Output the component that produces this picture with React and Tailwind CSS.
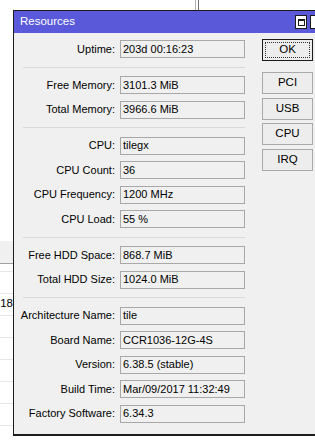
import React from "react";

const groups = [
  [["Uptime:", "203d 00:16:23"]],
  [
    ["Free Memory:", "3101.3 MiB"],
    ["Total Memory:", "3966.6 MiB"],
  ],
  [
    ["CPU:", "tilegx"],
    ["CPU Count:", "36"],
    ["CPU Frequency:", "1200 MHz"],
    ["CPU Load:", "55 %"],
  ],
  [
    ["Free HDD Space:", "868.7 MiB"],
    ["Total HDD Size:", "1024.0 MiB"],
  ],
  [
    ["Architecture Name:", "tile"],
    ["Board Name:", "CCR1036-12G-4S"],
    ["Version:", "6.38.5 (stable)"],
    ["Build Time:", "Mar/09/2017 11:32:49"],
    ["Factory Software:", "6.34.3"],
  ],
];

function Row({ label, value }) {
  return (
    <div className="flex items-center h-[18px]">
      <div className="w-[101px] text-right whitespace-nowrap leading-none">{label}</div>
      <div className="ml-[5px] w-[125px] h-[18px] border border-[#a8a8a8] bg-[#f0f0f0] flex items-center pl-[2px] whitespace-nowrap overflow-hidden leading-none">
        {value}
      </div>
    </div>
  );
}

function Separator() {
  return (
    <div className="h-[18px] flex items-center">
      <div className="ml-[9px] w-[222px] h-[1px] bg-[#d9d9d9]" />
    </div>
  );
}

function Btn({ children }) {
  return (
    <div className="h-[22px] w-[51px] border border-[#a9a9a9] bg-[#ededed] flex items-center justify-center text-[11.5px] leading-none">
      {children}
    </div>
  );
}

export default function App() {
  return (
    <div className="relative w-[315px] h-[447px] overflow-hidden bg-white font-['Liberation_Sans',Arial,sans-serif] text-[11px] text-black">
      {/* background window bits */}
      <div className="absolute left-[195px] top-0 h-[10px] w-[1px] bg-[#b0b0b0]" />
      <div className="absolute left-[198px] top-0 h-[10px] w-[1px] bg-[#707070]" />
      <div className="absolute left-0 top-[241px] w-[13px] flex flex-col">
        <div className="h-[23px] bg-[#f0f0f0] border-b border-[#a0a0a0]" />
        <div className="h-[8px] border-b border-[#e6e6e6]" />
        <div className="h-[22px] border-b border-[#e6e6e6]" />
        <div className="h-[22px] border-b border-[#e6e6e6] relative overflow-visible">
          <div className="absolute right-[0px] top-[4px] leading-none text-[11.5px] whitespace-nowrap">:18</div>
        </div>
        <div className="h-[22px] border-b border-[#e6e6e6]" />
        <div className="h-[22px] border-b border-[#e6e6e6]" />
        <div className="h-[22px] border-b border-[#e6e6e6]" />
        <div className="h-[22px] border-b border-[#e6e6e6]" />
        <div className="h-[22px] border-b border-[#e6e6e6]" />
        <div className="h-[22px] border-b border-[#e6e6e6]" />
      </div>

      {/* Resources window */}
      <div className="absolute left-[13px] top-[10px] w-[310px] h-[426px] border-l border-t border-b-2 border-[#1c1c1c] bg-[#f0f0f0] flex flex-col">
        <div className="h-[22px] bg-[#5959d9] flex items-center pl-[6px] text-white text-[11.5px] leading-none">
          <span>Resources</span>
          <div className="ml-auto mr-[1px] flex gap-[3px]">
            <div className="w-[12px] h-[14px] bg-white border border-[#1c1c1c] flex items-center justify-center">
              <div className="w-[7px] h-[7px] border border-[#1c1c1c] border-t-2" />
            </div>
            <div className="w-[12px] h-[14px] bg-white border border-[#1c1c1c]" />
          </div>
        </div>
        <div className="flex pt-[6px]">
          <div className="flex flex-col mt-[1px]">
            {groups.map((g, gi) => (
              <React.Fragment key={gi}>
                {gi > 0 && <Separator />}
                <div className="flex flex-col gap-[6.5px]">
                  {g.map(([l, v]) => (
                    <Row key={l} label={l} value={v} />
                  ))}
                </div>
              </React.Fragment>
            ))}
          </div>
          <div className="ml-[17px] flex flex-col">
            <div className="h-[22px] w-[51px] border border-[#1a1a1a] bg-[#ededed] flex p-[2px]">
              <div className="flex-1 border border-dotted border-[#333] flex items-center justify-center text-[11.5px] leading-none">
                OK
              </div>
            </div>
            <div className="mt-[11px] flex flex-col gap-[3.5px]">
              <Btn>PCI</Btn>
              <Btn>USB</Btn>
              <Btn>CPU</Btn>
              <Btn>IRQ</Btn>
            </div>
          </div>
        </div>
      </div>
    </div>
  );
}
